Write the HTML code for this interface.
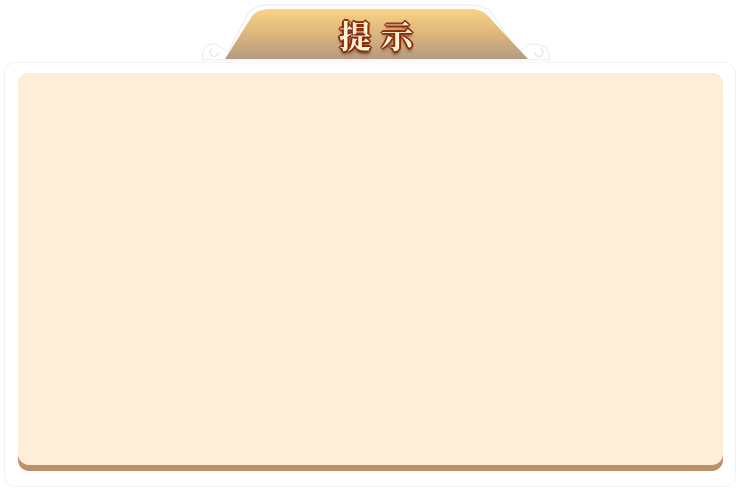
<!DOCTYPE html>
<html><head><meta charset="utf-8"><style>
body{margin:0;width:740px;height:490px;background:#fff;position:relative;overflow:hidden}
.outer{position:absolute;left:4px;top:62px;width:730px;height:423px;border:1px solid #f3f3f3;border-radius:12px;background:#fff}
.inner{position:absolute;left:18px;top:73px;width:705px;height:398px;border-radius:11px;background:#be9068}
.cream{position:absolute;left:18px;top:73px;width:705px;height:392px;border-radius:11px;background:#feeed9}
.t{position:absolute;left:339px;top:12px;font:bold 32px "Noto Serif CJK SC","Noto Sans CJK SC",serif;color:#fff3d6;letter-spacing:10px;
text-shadow:-2px 0 #8a2c0c,2px 0 #8a2c0c,0 -2px #8a2c0c,0 2px #8a2c0c,-1px -1px #8a2c0c,1px 1px #8a2c0c,-1px 1px #8a2c0c,1px -1px #8a2c0c,0 3px 3px #5a2a10}
</style></head><body>
<div class="outer"></div>
<svg style="position:absolute;left:0;top:0" width="740" height="70">
<defs><linearGradient id="g" x1="0" y1="0" x2="0" y2="1"><stop offset="0" stop-color="#f8d386"/><stop offset="0.5" stop-color="#ddb67c"/><stop offset="1" stop-color="#b49a80"/></linearGradient></defs>
<path d="M203,60 Q200,44 216,44 L228,52 L248,14 Q254,5 268,5 L472,5 Q486,5 492,14 L518,52 L530,44 Q552,44 549,60 Z" fill="#fff" stroke="#efefef" stroke-width="1.2"/>
<path d="M225,59 L252,16 Q258,9 270,9 L470,9 Q482,9 488,16 L528,59 Z" fill="url(#g)"/>
<path d="M218,52 a4,4 0 1 1 -6,-3" fill="none" stroke="#e8e8e8" stroke-width="1.5"/>
<path d="M535,52 a4,4 0 1 0 6,-3" fill="none" stroke="#e8e8e8" stroke-width="1.5"/>
</svg>
<div class="t">提示</div>
<div class="inner"></div>
<div class="cream"></div>
</body></html>
